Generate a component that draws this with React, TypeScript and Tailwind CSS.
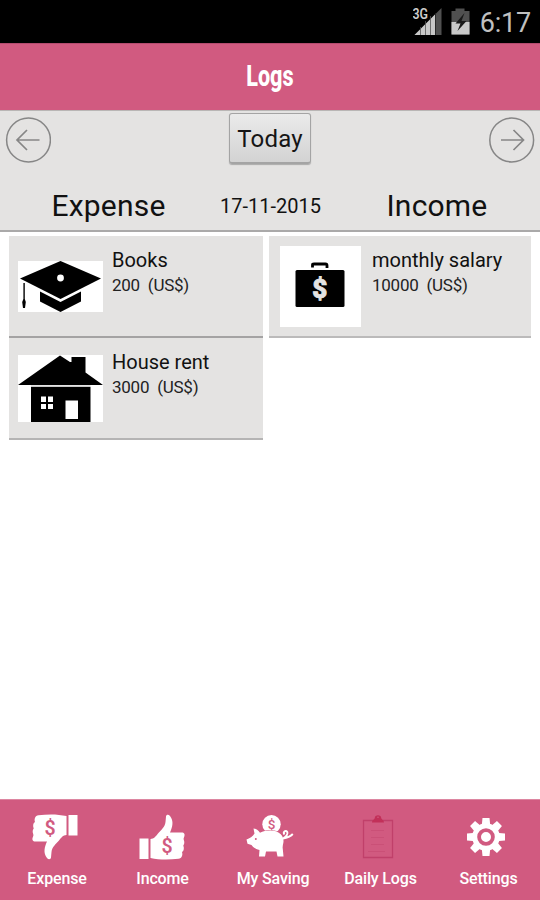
import React from "react";

const INK = "#d15a80";

function ThumbUp({ flipped }: { flipped?: boolean }) {
  return (
    <svg width="46" height="46" viewBox="0 0 46 46" fill="#fff">
      <g transform={flipped ? "rotate(180 23 23)" : undefined}>
        <path d="M0.5 24.5h9v20.5h-9z" />
        <path d="M11.500 25 C15 25 17 22 19 19.500 C22 16 26 13 26.500 8 L27 2.500 C27.200 .5 29.500 .2 31 2 C35 7 33.500 13 31 18.500 H42.500 C45.500 18.500 46 20.500 45.300 22.500 C44.800 24 44.300 24.500 44.800 26 C45.600 28 45.500 30 44.300 31.500 C45.300 34 45 37 43 38 C44 41 43 44.300 39.500 44.800 C30 46 20 46 11.500 44z" />
      </g>
      <text
        x={flipped ? 18 : 28}
        y={flipped ? 20.5 : 38.5}
        textAnchor="middle"
        fontFamily="Roboto, sans-serif"
        fontWeight="600"
        fontSize="19.500"
        fill={INK}
      >
        $
      </text>
    </svg>
  );
}

function Piggy() {
  return (
    <svg width="48" height="44" viewBox="0 0 48 44" fill="#fff">
      <circle cx="25.500" cy="9.200" r="9.200" />
      <text x="25.500" y="14" textAnchor="middle" fontFamily="Roboto, sans-serif" fontSize="13.500" fontWeight="500" fill={INK}>
        $
      </text>
      <path
        d="M7.500 13.500 C10.500 14 12.500 15.500 14 17.800 C20 14.800 30 14.500 34.500 19 C37 21.500 38 24.500 37.300 28 C37 30 36.300 31.500 36.800 34 L37.500 41.500 H31.500 L30.500 36.500 H20 L19 41.500 H13 L13.500 35 C9.500 34 7.500 32.500 5.500 30 L1.500 28.800 L0.500 24.500 C3.500 23.500 7 21.500 8.500 18.500z"
        stroke={INK}
        strokeWidth="1"
        paintOrder="stroke"
      />
      <circle cx="9.800" cy="24" r="1" fill={INK} />
      <path
        d="M38.500 19.500 C36.500 17 39.500 14.800 41.200 16.800 C42.500 19 40 22 37 23.500 C41 22.800 44.500 21.300 46.800 19"
        fill="none"
        stroke="#fff"
        strokeWidth="1.900"
      />
    </svg>
  );
}

function Clipboard() {
  return (
    <svg width="32" height="45" viewBox="0 0 32 45" fill="none" stroke="#c0406a" strokeWidth="1.300">
      <path d="M1.500 6.500h29v37h-29z" />
      <path d="M10 8.500 C10 6 12.500 5.500 12.800 4 C12.500 .2 19.500 .2 19.200 4 C19.500 5.500 22 6 22 8.500z" fill="#c23059" stroke="none" />
      <circle cx="16" cy="3.300" r=".8" fill={INK} stroke="none" />
      <path d="M9 16.500h13M9 23.500h13M9 30.500h13M6 37.500h17" strokeWidth="1" opacity=".4" />
    </svg>
  );
}

function Gear() {
  return (
    <svg width="38" height="40" viewBox="-19 -20 38 40" fill="#fff">
      {[0, 45, 90, 135].map((a) => (
        <path key={a} d="M-3.500 -19h7l.6 6v26l-.6 6h-7l-.6 -6v-26z" transform={`rotate(${a})`} />
      ))}
      <circle r="13.800" />
      <circle r="6.900" fill="none" stroke={INK} strokeWidth="3.800" />
    </svg>
  );
}

function CircleArrow({ right }: { right?: boolean }) {
  return (
    <svg width="46" height="46" viewBox="0 0 46 46" fill="none" stroke="#868686" strokeWidth="1.500">
      <circle cx={right ? 22.7 : 23.5} cy="23" r="21.900" />
      <path
        d={right ? "M12 23H34M24.500 13L34.500 23L24.500 33" : "M34.500 23H12.500M22 13L12 23L22 33"}
        strokeWidth="1.700"
      />
    </svg>
  );
}

function GradCap() {
  return (
    <svg width="85" height="51" viewBox="0 0 85 51" className="bg-white">
      <path d="M42.500 0L83 17.500L42.500 38L2 17.500z" />
      <path d="M22 30.500L42.500 41L63 30.500V40.500L42.500 51L22 40.500z" />
      <circle cx="42.500" cy="17" r="3.400" fill="#fff" />
      <path d="M5.400 22h1.400v16l1 3l-.8 6h-2l-.8-6l1.200-3z" />
    </svg>
  );
}

function House() {
  return (
    <svg width="85" height="67" viewBox="0 0 85 67" className="bg-white">
      <path d="M0 30L42 .5L52 7H53.500V2H67.500V17.500L85 30z" />
      <path d="M13 30.500h59.500v1.500h-59.500z" fill="#c8c8c8" />
      <path d="M13 32h59.500v35h-59.500z" />
      <path d="M23 41.500h5v5.500h-5zM30 41.500h5v5.500h-5zM23 49h5v5h-5zM30 49h5v5h-5zM47.500 45.500h12.500v18.500h-12.500z" fill="#fff" />
    </svg>
  );
}

function Briefcase() {
  return (
    <svg width="81" height="81" viewBox="0 0 81 81" className="bg-white">
      <path d="M32.500 21.500V19Q32.500 18 34 18H45.500Q47 18 47 19.500V22" fill="none" stroke="#000" strokeWidth="2.800" />
      <rect x="15.500" y="24" width="49" height="37" rx="1.500" />
      <text x="39.800" y="51.500" textAnchor="middle" fontFamily="Roboto, sans-serif" fontWeight="900" fontSize="26" fill="#e4e3e2" stroke="#e4e3e2" strokeWidth=".8">
        $
      </text>
    </svg>
  );
}

function StatusIcons() {
  return (
    <svg width="60" height="30" viewBox="0 0 60 30">
      <path d="M28.500 1V28H1.500z" fill="#505050" />
      <path d="M22 7.500V28H1.500z" fill="#c8c8c8" />
      <path d="M7.500 20V28M12.500 14V28M17.500 9V28" stroke="#555" strokeWidth=".8" />
      <path d="M22.500 6V28" stroke="#222" strokeWidth=".8" />
      <text x="-.5" y="11.500" fontFamily="Roboto, sans-serif" fontWeight="600" fontSize="14" fill="#ccc" stroke="#000" strokeWidth="2" paintOrder="stroke" textLength="15.500" lengthAdjust="spacingAndGlyphs">
        3G
      </text>
      <path d="M38.500 4h4V1.500h9V4h5V27.500h-18z" fill="#505050" />
      <path d="M38.500 15h18v12.500h-18z" fill="#c8c8c8" />
      <path d="M51.500 6L42.500 16.500H47.500L44.500 24L53.500 14H48.500z" fill="#191919" />
    </svg>
  );
}

type Entry = { icon: React.ReactNode; name: string; amount: string };

function EntryCard({ entry, className }: { entry: Entry; className: string }) {
  return (
    <div className={`flex bg-[#e4e3e2] pl-[9px] ${className}`}>
      <div className="flex w-[85px] shrink-0 items-center justify-center">{entry.icon}</div>
      <div className="ml-[9px] whitespace-pre pt-[12px]">
        <div className="text-[20px] leading-6 text-[#111]">{entry.name}</div>
        <div className="mt-px text-[17px] leading-6 tracking-[-0.25px] text-[#222]">{entry.amount}</div>
      </div>
    </div>
  );
}

const tabs = [
  { label: "Expense", icon: <ThumbUp flipped />, shift: "pl-[6px]", iconShift: "-ml-[5px]" },
  { label: "Income", icon: <ThumbUp />, shift: "pl-px", iconShift: "-ml-[2px]" },
  { label: "My Saving", icon: <Piggy />, shift: "pl-[6px]", iconShift: "-ml-[6px]" },
  { label: "Daily Logs", icon: <Clipboard />, shift: "pl-[5px]", iconShift: "-ml-[6px]" },
  { label: "Settings", icon: <Gear />, shift: "pl-[5px]", iconShift: "-ml-[5px]" },
];

export default function App() {
  return (
    <div className="flex h-[900px] w-[540px] flex-col overflow-hidden bg-white font-[Roboto,sans-serif]">
      <div className="flex h-[43px] shrink-0 items-start justify-end bg-black pr-[9px] text-[#c0c0c0]">
        <div className="mr-[7px] mt-[7px]">
          <StatusIcons />
        </div>
        <span className="mt-[7px] text-[27px] leading-8 tracking-[-0.2px]">6:17</span>
      </div>

      <header className="flex h-[67px] shrink-0 justify-center border-t border-[#b34b6e] bg-[#d15a80] pt-[16px]">
        <h1 className="scale-x-[0.72] text-[30px] font-extrabold leading-8 text-white">Logs</h1>
      </header>

      <section className="flex h-[122px] shrink-0 flex-col border-b-2 border-t border-b-[#aaa9a9] border-t-[#b9b6b5] bg-[#e4e3e2]">
        <div className="flex justify-between px-[5px]">
          <div className="mt-[6px]">
            <CircleArrow />
          </div>
          <button className="mt-[2px] h-[51px] w-[82px] rounded-[3px] border border-b-2 border-[#a4a4a4] bg-linear-to-b from-[#ebebeb] to-[#d3d3d3] pt-px text-[24px] leading-none tracking-[0.2px] text-[#151515] shadow-[0_1px_1px_#aaa]">
            Today
          </button>
          <div className="mt-[6px]">
            <CircleArrow right />
          </div>
        </div>
        <div className="mt-[24px] flex items-center text-[#111]">
          <div className="w-[217px] shrink-0 text-center text-[30px] leading-9 tracking-[0.2px]">Expense</div>
          <div className="w-[107px] shrink-0 text-center text-[20px] leading-9">17-11-2015</div>
          <div className="w-[216px] shrink-0 pl-[10px] text-center text-[30px] leading-9 tracking-[0.2px]">Income</div>
        </div>
      </section>

      <main className="flex flex-1 gap-[6px] px-[9px] pt-[4px]">
        <div className="w-[254px]">
          <EntryCard
            className="h-[102px] border-b-2 border-[#a4a3a3]"
            entry={{ icon: <GradCap />, name: "Books", amount: "200  (US$)" }}
          />
          <EntryCard
            className="h-[102px] border-b-2 border-[#b5b4b4]"
            entry={{ icon: <House />, name: "House rent", amount: "3000  (US$)" }}
          />
        </div>
        <div className="w-[262px]">
          <EntryCard
            className="h-[102px] border-b-2 border-[#bbbaba]"
            entry={{ icon: <Briefcase />, name: "monthly salary", amount: "10000  (US$)" }}
          />
        </div>
      </main>

      <nav className="grid h-[101px] shrink-0 grid-cols-5 border-t border-[#dd86a1] bg-[#d15a80] text-white">
        {tabs.map((t) => (
          <div key={t.label} className={`flex flex-col items-center ${t.shift}`}>
            <div className={`mt-[12px] flex h-[49px] items-center ${t.iconShift}`}>{t.icon}</div>
            <span className="mt-[8px] whitespace-nowrap text-[16px] font-medium leading-5 tracking-[-0.15px]">{t.label}</span>
          </div>
        ))}
      </nav>
    </div>
  );
}
